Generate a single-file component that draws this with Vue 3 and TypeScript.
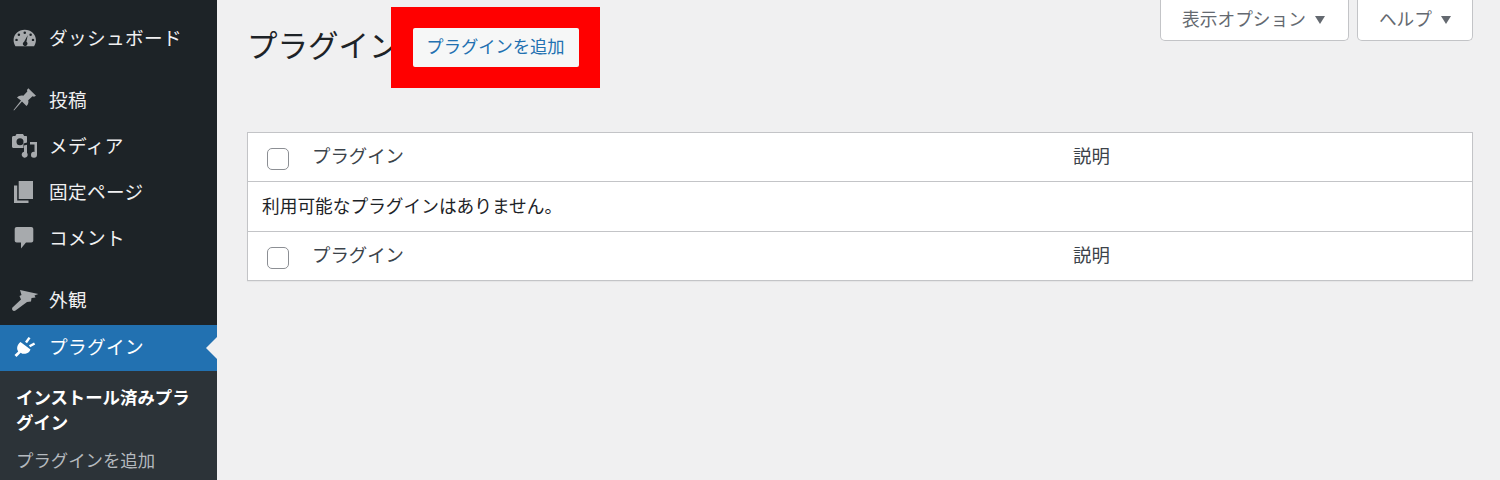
<script setup lang="ts">
interface MenuItem { label: string; icon: string; gap?: boolean; active?: boolean }
const menu: MenuItem[] = [
  { label: 'ダッシュボード', icon: 'dash' },
  { label: '投稿', icon: 'pin', gap: true },
  { label: 'メディア', icon: 'media' },
  { label: '固定ページ', icon: 'page' },
  { label: 'コメント', icon: 'comment' },
  { label: '外観', icon: 'brush', gap: true },
  { label: 'プラグイン', icon: 'plug', active: true },
]
</script>

<template>
  <div class="page">
    <aside class="sidebar">
      <nav class="menu">
        <a v-for="m in menu" :key="m.label" class="item" :class="{ gap: m.gap, active: m.active }">
          <svg class="icon" viewBox="0 0 24 24" aria-hidden="true">
            <template v-if="m.icon === 'dash'">
              <path transform="translate(0 3.200) scale(.98 .95)" fill-rule="evenodd" d="M12 1.500C5.600 1.500.6 6.300.6 12.400c0 2.500.7 4.600 1.900 6.600h19c1.200-2 1.900-4.100 1.900-6.600C23.400 6.300 18.400 1.500 12 1.500zM12 3.400a1.300 1.300 0 1 1 0 2.600 1.300 1.300 0 0 1 0-2.600zM6 5.600a1.300 1.300 0 1 1 0 2.600 1.300 1.300 0 0 1 0-2.600zM18 5.600a1.300 1.300 0 1 1 0 2.600 1.300 1.300 0 0 1 0-2.600zM3.600 11a1.300 1.300 0 1 1 0 2.600 1.300 1.300 0 0 1 0-2.600zM20.400 11a1.300 1.300 0 1 1 0 2.600 1.300 1.300 0 0 1 0-2.600zM15 7.500l-1.300 6.800a2.400 2.400 0 1 1-3.700 2.200c0-.9.500-1.700 1.200-2.100z" />
            </template>
            <template v-else-if="m.icon === 'pin'">
              <path d="M15.300 1.300L23 8.700l-2 1.100-1.500-.5-4.300 4c.6 1.900.1 4.200-1.700 5.700L9 14.500 1 23.500l-.5-.5L8 13.500l-4-3c1.500-1.800 4-2.500 6.300-1.800l4-4.200-.3-1.500z" />
            </template>
            <template v-else-if="m.icon === 'media'">
              <path fill-rule="evenodd" d="M3.500 1h6.500l1.200 2h1.800c.6 0 1 .4 1 1v5.500l-3.500 1V15H.5c-.8 0-1.500-.7-1.500-1.500V4.500C-1 3.700-.3 3 .5 3h1.800zM7 5.200a3.500 3.500 0 1 0 0 7 3.500 3.500 0 0 0 0-7z" />
              <path d="M17 9h7v12.800a3 3 0 1 1-2.500-2.900V11.500H17zM11 12.500l3-.8v8.100a3 3 0 1 1-3-1z" />
            </template>
            <template v-else-if="m.icon === 'page'">
              <path d="M5.700 2H20v18H5.700z" />
              <path d="M1 6.500h3.200v15h11.300V24H1z" />
            </template>
            <template v-else-if="m.icon === 'comment'">
              <path d="M3.700 2h14.600c1.100 0 2 .9 2 2v11.500c0 1.100-.9 2-2 2H13l-5 6v-6H3.700c-1.100 0-2-.9-2-2V4c0-1.100.9-2 2-2z" />
            </template>
            <template v-else-if="m.icon === 'brush'">
              <path d="M7 3L25.300 7l-3.800 1.500 1 2-4 .5-.5 3.500-4 .5-2 1.500-9.500 7c-1 .8-2.500.5-3.100-.5-.6-1-.3-2.200.6-2.900L8 12.500 6.500 9l2-1z" />
            </template>
            <template v-else>
              <path transform="translate(0 -1.500)" d="M15.500 2.500l2 1.200-3.500 5-2-1.400zM21 8l1.200 2-5 2.800-1.300-2z" />
              <path transform="translate(0 -1.500)" d="M7.500 7.500l10 7.500c-1 2.500-2.800 4-5.200 4.300-1.900.2-3.300-.1-4.600-1.100L3.500 22.500 1.500 20.500l3.700-3.500c-1-1.400-1.300-3-.9-4.700.4-1.900 1.500-3.500 3.200-4.800z" />
            </template>
          </svg>
          <span class="label">{{ m.label }}</span>
        </a>
      </nav>
      <div class="submenu">
        <a class="sub current">インストール済みプラグイン</a>
        <a class="sub">プラグインを追加</a>
      </div>
    </aside>

    <main class="content">
      <div class="tabs">
        <button class="tab">表示オプション<i class="caret"></i></button>
        <button class="tab">ヘルプ<i class="caret"></i></button>
      </div>

      <header class="head">
        <h1>プラグイン</h1>
        <div class="highlight">
          <a class="add">プラグインを追加</a>
        </div>
      </header>

      <div class="table">
        <div class="row">
          <span class="check"></span>
          <span class="col-name">プラグイン</span>
          <span class="col-desc">説明</span>
        </div>
        <div class="row empty">利用可能なプラグインはありません。</div>
        <div class="row">
          <span class="check"></span>
          <span class="col-name">プラグイン</span>
          <span class="col-desc">説明</span>
        </div>
      </div>
    </main>
  </div>
</template>

<style>
html, body { margin: 0; background: #f0f0f1; }
</style>

<style scoped>
.page {
  display: flex;
  width: 1500px;
  height: 480px;
  overflow: hidden;
  background: #f0f0f1;
  font-family: "Noto Sans CJK JP", "Liberation Sans", sans-serif;
}
.sidebar {
  flex: 0 0 217px;
  background: #1d2327;
  display: flex;
  flex-direction: column;
  padding-top: 14px;
  box-sizing: border-box;
}
.item {
  display: flex;
  align-items: center;
  height: 46.2px;
  padding-left: 13px;
  gap: 12px;
  color: #f0f0f1;
  font-size: 18.6px;
  letter-spacing: 0.4px;
  position: relative;
}
.label { margin-bottom: 1px; }
.item.gap { margin-top: 15.5px; }
.icon {
  width: 24px;
  height: 24px;
  fill: #a7aaad;
  flex: none;
  overflow: visible;
}
.item.active {
  background: #2271b1;
  color: #fff;
  margin-top: 3px;
}
.item.active .label { margin-bottom: 5px; }
.item.active .icon { fill: #fff; }
.item.active::after {
  content: "";
  position: absolute;
  right: 0;
  top: 50%;
  margin-top: -11px;
  border: 11px solid transparent;
  border-right-color: #f0f0f1;
  border-left-width: 0;
}
.submenu {
  flex: 1;
  background: #2c3338;
  padding-top: 14px;
  display: flex;
  flex-direction: column;
}
.sub {
  padding: 0 16px;
  font-size: 17.4px;
  line-height: 25px;
  color: #b4b9be;
}
.sub.current {
  color: #fff;
  font-weight: 700;
  line-height: 24.5px;
  margin-bottom: 13px;
}
.content {
  flex: 1;
  padding: 0 27px 0 30px;
  position: relative;
  display: flex;
  flex-direction: column;
}
.tabs {
  position: absolute;
  top: 0;
  right: 27px;
  display: flex;
  gap: 8px;
}
.tab {
  height: 41px;
  box-sizing: border-box;
  background: #fff;
  border: 1px solid #c3c4c7;
  border-top: 0;
  border-radius: 0 0 5px 5px;
  padding: 0 21px 2px 21px;
  color: #646970;
  font: inherit;
  font-size: 17.7px;
  line-height: 1;
  display: flex;
  align-items: center;
  gap: 9px;
}
.tab:first-child { padding-right: 23px; }
.caret {
  width: 0;
  height: 0;
  margin-top: 2px;
  border-style: solid;
  border-width: 8px 5.5px 0;
  border-color: #646970 transparent transparent;
}
.head {
  display: flex;
  align-items: flex-start;
  height: 132px;
  position: relative;
}
h1 {
  margin: 23px 0 0 0;
  font-size: 30.5px;
  font-weight: 400;
  line-height: 42px;
  color: #1d2327;
  white-space: nowrap;
}
.highlight {
  position: absolute;
  left: 144px;
  top: 7px;
  width: 209px;
  height: 81px;
  background: #f00;
  display: flex;
  align-items: center;
  justify-content: center;
}
.add {
  width: 166px;
  height: 39px;
  box-sizing: border-box;
  padding-bottom: 5px;
  background: #f6f7f7;
  border-radius: 2px;
  color: #2271b1;
  font-size: 17.3px;
  display: flex;
  align-items: center;
  justify-content: center;
}
.table {
  background: #fff;
  border: 1px solid #c3c4c7;
  box-shadow: 0 1px 1px rgba(0, 0, 0, .04);
}
.row {
  display: flex;
  align-items: center;
  height: 48px;
  padding-left: 19px;
  font-size: 18.4px;
  color: #3c434a;
  line-height: 1;
}
.row + .row { border-top: 1px solid #c3c4c7; }
.row.empty {
  padding-left: 14px;
  padding-bottom: 2px;
  color: #1d2327;
  box-sizing: border-box;
  height: 50px;
  font-size: 17.7px;
}
.check {
  flex: none;
  width: 22px;
  height: 22px;
  box-sizing: border-box;
  border: 1px solid #8c8f94;
  border-radius: 5px;
  background: #fff;
  margin-top: 4px;
}
.col-name {
  width: 762px;
  margin-left: 23px;
  margin-bottom: 3px;
}
.col-desc { margin-left: -1px; margin-bottom: 3px; }
</style>
